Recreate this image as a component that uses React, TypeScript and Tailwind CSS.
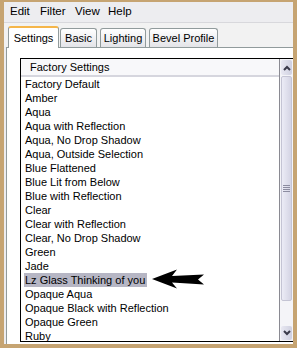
import React from "react";

const presets = [
  "Factory Default",
  "Amber",
  "Aqua",
  "Aqua with Reflection",
  "Aqua, No Drop Shadow",
  "Aqua, Outside Selection",
  "Blue Flattened",
  "Blue Lit from Below",
  "Blue with Reflection",
  "Clear",
  "Clear with Reflection",
  "Clear, No Drop Shadow",
  "Green",
  "Jade",
  "Lz Glass Thinking of you",
  "Opaque Aqua",
  "Opaque Black with Reflection",
  "Opaque Green",
  "Ruby",
];

export default function App() {
  const selected = "Lz Glass Thinking of you";
  const tabClass =
    "h-[19px] flex items-center justify-center text-[11px] bg-gradient-to-b from-white to-[#e4e4e8] border-x border-t border-[#919b9c] rounded-t-[3px]";

  return (
    <div
      className="w-[297px] h-[348px] bg-[#c6a472] pt-[2px] px-[4px] pb-[4px] overflow-hidden"
      style={{ fontFamily: '"Liberation Sans", Arial, sans-serif' }}
    >
      <div className="flex flex-col h-full bg-[#ededf0] overflow-hidden">
        {/* menu bar */}
        <div className="h-[21px] flex items-center pl-[6px] text-[11.5px] text-black border-b border-[#d8d8dc]">
          <span className="w-[30px]">Edit</span>
          <span className="w-[35px]">Filter</span>
          <span className="w-[33px]">View</span>
          <span>Help</span>
        </div>

        {/* tabs */}
        <div className="flex items-end h-[24px] pl-[4px] bg-[#f2f2f2]">
          <div className="relative z-10 -mb-px h-[22px] w-[51px] flex items-center justify-center text-[11px] bg-white border-x border-[#919b9c] rounded-t-[3px] border-t-2 border-t-[#f5b64a]">
            Settings
          </div>
          <div className={`${tabClass} w-[37px] ml-[1px]`}>Basic</div>
          <div className={`${tabClass} w-[46px] ml-[3px]`}>Lighting</div>
          <div className={`${tabClass} w-[69px] ml-[3px]`}>Bevel Profile</div>
        </div>

        {/* panel */}
        <div className="flex-1 ml-[2px] bg-white border-l border-t border-[#919b9c] pl-[13px] pt-[10px] pb-[2px] flex min-h-0">
          <div className="flex-1 flex border-l border-t border-b border-black min-h-0 overflow-hidden">
            <div className="flex-1 flex flex-col min-w-0 overflow-hidden">
              <div className="h-[18px] shrink-0 flex items-center pl-[9px] text-[11px] bg-[#f8f8fa] border-b-2 border-[#d6d6de]">
                Factory Settings
              </div>
              <div className="pl-[4px] text-[11px] leading-[14px] whitespace-nowrap">
                {presets.map((p) => (
                  <div key={p} className="h-[14px] flex items-center">
                    {p === selected ? (
                      <span className="relative bg-[#b6b6c4] px-[1px] -ml-px pr-[2px]">
                        {p}
                        <svg
                          className="absolute left-[128px] top-[-4px]"
                          width="52"
                          height="20"
                          viewBox="0 0 52 20"
                        >
                          <path
                            d="M0 10 L25 0.5 L20 7 L52 5.5 L46 10.5 L52 15.5 L20 13.5 L25 19.5 Z"
                            fill="#000"
                          />
                        </svg>
                      </span>
                    ) : (
                      <span>{p}</span>
                    )}
                  </div>
                ))}
              </div>
            </div>

            {/* scrollbar */}
            <div className="w-[14px] shrink-0 flex flex-col bg-[#f4f4f8] border-l border-[#8a8a92]">
              <div className="h-[15px] mt-[1px] mx-[1px] rounded-[2px] bg-gradient-to-r from-[#e8e8f2] to-[#cfd0e0] flex items-center justify-center">
                <svg width="8" height="6" viewBox="0 0 8 6">
                  <path d="M1 5 L4 2 L7 5" stroke="#3a3a4a" strokeWidth="2" fill="none" />
                </svg>
              </div>
              <div className="h-[225px] mt-[1px] mx-[1px] rounded-[2px] bg-gradient-to-r from-[#ececf6] to-[#d4d4e4] border border-[#c4c4d4] flex items-center justify-center">
                <div className="flex flex-col gap-[1px]">
                  <div className="w-[7px] h-[1px] bg-[#8c8ca0]" />
                  <div className="w-[7px] h-[1px] bg-[#8c8ca0]" />
                  <div className="w-[7px] h-[1px] bg-[#8c8ca0]" />
                  <div className="w-[7px] h-[1px] bg-[#8c8ca0]" />
                </div>
              </div>
              <div className="flex-1" />
              <div className="h-[14px] mb-[1px] mx-[1px] rounded-[2px] bg-gradient-to-r from-[#e8e8f2] to-[#cfd0e0] flex items-center justify-center">
                <svg width="8" height="6" viewBox="0 0 8 6">
                  <path d="M1 1 L4 4 L7 1" stroke="#3a3a4a" strokeWidth="2" fill="none" />
                </svg>
              </div>
            </div>
          </div>
        </div>
      </div>
    </div>
  );
}
